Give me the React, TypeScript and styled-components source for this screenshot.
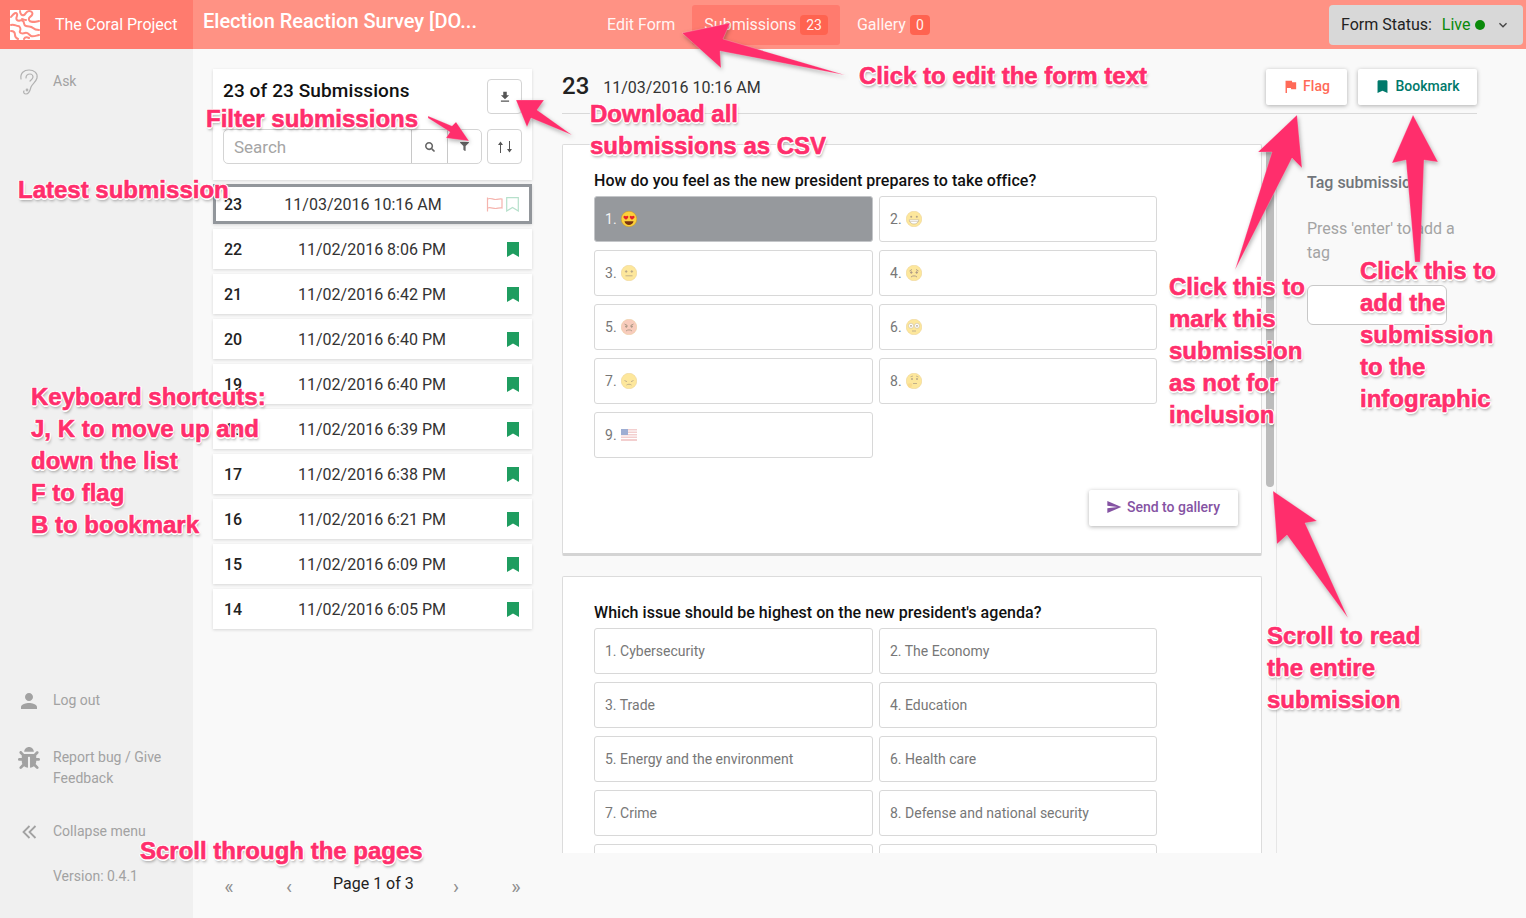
import React from 'react';
import styled, { createGlobalStyle } from 'styled-components';
import { FaBug, FaFilter, FaSearch } from 'react-icons/fa';
import { MdBookmark, MdFileDownload, MdFlag, MdKeyboardArrowDown, MdPerson, MdSend } from 'react-icons/md';

const GlobalStyle = createGlobalStyle`
  html, body { margin: 0; padding: 0; background: #f9f9f9; }
  body { font-family: Roboto, "Noto Sans", sans-serif; color: #222; overflow: hidden; }
  * { box-sizing: border-box; }
`;

const Page = styled.div`
  position: relative;
  width: 1526px;
  height: 918px;
  overflow: hidden;
  display: flex;
  flex-direction: column;
`;

const Header = styled.header`
  height: 49px;
  flex: none;
  display: flex;
  align-items: center;
  background: #ff9284;
  color: #fff;
`;

const Brand = styled.div`
  width: 193px;
  height: 100%;
  flex: none;
  display: flex;
  align-items: center;
  gap: 15px;
  padding-left: 10px;
  background: #ff7b6e;
  font-size: 16px;
`;

const FormTitle = styled.div`
  width: 402px;
  flex: none;
  padding-left: 10px;
  font-size: 20px;
  font-weight: 500;
  margin-top: -7px;
`;

const Nav = styled.nav`
  display: flex;
  align-items: center;
  flex: 1;
  height: 40px;
`;

const NavTab = styled.div<{ $active?: boolean }>`
  height: 40px;
  display: flex;
  align-items: center;
  gap: 4px;
  padding: 0 12px;
  border-radius: 3px;
  font-size: 16px;
  margin-right: 5px;
  color: rgba(255, 255, 255, 0.92);
  background: ${(p) => (p.$active ? '#ff7b6e' : 'transparent')};
`;

const NavBadge = styled.span`
  height: 20px;
  padding: 0 6px;
  display: flex;
  align-items: center;
  justify-content: center;
  border-radius: 4px;
  background: #ff6350;
  font-size: 14px;
`;

const StatusBox = styled.div`
  width: 194px;
  height: 40px;
  margin-right: 3px;
  flex: none;
  display: flex;
  align-items: center;
  padding: 0 12px;
  border-radius: 4px;
  background: #d8d8d8;
  color: #222;
  font-size: 16px;
`;

const LiveText = styled.span`
  color: #0a8a0a;
  margin-left: 10px;
`;

const LiveDot = styled.span`
  width: 10px;
  height: 10px;
  border-radius: 50%;
  background: #0a8a0a;
  margin-left: 4px;
  margin-right: 10px;
`;

const Body = styled.div`
  flex: 1;
  display: flex;
  min-height: 0;
`;

const Sidebar = styled.aside`
  width: 193px;
  flex: none;
  background: #f0f0f0;
  display: flex;
  flex-direction: column;
  color: #a2a2a2;
  font-size: 14px;
  line-height: 21px;
`;

const SideItem = styled.div<{ $top: number }>`
  display: flex;
  margin-top: ${(p) => p.$top}px;
`;

const SideIcon = styled.div`
  width: 53px;
  height: 21px;
  flex: none;
  display: flex;
  justify-content: center;
  align-items: center;
  padding-left: 5px;
  color: #a2a2a2;
`;

const SideLabel = styled.div`
  flex: 1;
  padding-right: 20px;
`;

const ListColumn = styled.section`
  width: 319px;
  flex: none;
  margin-left: 20px;
  padding-top: 20px;
  display: flex;
  flex-direction: column;
`;

const ListTop = styled.div`
  height: 111px;
  background: #fff;
  box-shadow: 0 1px 3px rgba(0, 0, 0, 0.14);
  padding: 10px;
  margin-bottom: 4px;
  display: flex;
  flex-direction: column;
  gap: 15px;
`;

const ListTopRow = styled.div`
  display: flex;
  align-items: center;
  justify-content: space-between;
`;

const ListTitle = styled.h2`
  margin: -12px 0 0;
  font-size: 19px;
  font-weight: 500;
  color: #111;
  letter-spacing: 0.1px;
`;

const IconButton = styled.button`
  width: 35px;
  height: 35px;
  padding: 0;
  display: flex;
  align-items: center;
  justify-content: center;
  background: #fff;
  border: 1px solid #d4d4d4;
  border-radius: 4px;
  color: #555;
  font-size: 13px;
`;

const SearchBox = styled.div`
  width: 259px;
  height: 35px;
  display: flex;
  border: 1px solid #d4d4d4;
  border-radius: 5px;
`;

const SearchInput = styled.div`
  flex: 1;
  padding-left: 10px;
  line-height: 35px;
  font-size: 17px;
  color: #a5a5a5;
`;

const SearchAddon = styled.div<{ $w: number; $size: number }>`
  width: ${(p) => p.$w}px;
  display: flex;
  align-items: center;
  justify-content: center;
  border-left: 1px solid #c8c8c8;
  color: #666;
  font-size: ${(p) => p.$size}px;
`;

const Row = styled.div<{ $active?: boolean }>`
  height: 40px;
  margin-bottom: 5px;
  display: flex;
  align-items: center;
  padding: 0 11px 0 ${(p) => (p.$active ? 8 : 11)}px;
  background: #fff;
  box-shadow: 0 1px 3px rgba(0, 0, 0, 0.14);
  border: ${(p) => (p.$active ? '3px solid #92969b' : '0')};
  font-size: 16px;
  color: #333;
`;

const RowNumber = styled.strong`
  width: 40px;
  font-weight: 500;
  color: #222;
`;

const RowDate = styled.span<{ $active?: boolean }>`
  flex: 1;
  text-align: center;
  padding-right: ${(p) => (p.$active ? 24 : 27)}px;
`;

const RowIcons = styled.span<{ $active?: boolean }>`
  display: flex;
  align-items: center;
  gap: 3px;
  margin-right: ${(p) => (p.$active ? -1 : 2)}px;
`;

const Pager = styled.div`
  margin-top: auto;
  margin-bottom: 19px;
  display: flex;
  align-items: center;
  color: #8f8f8f;
  font-size: 20px;
`;

const PagerArrow = styled.span<{ $w: number; $gap?: number }>`
  width: ${(p) => p.$w}px;
  margin-left: ${(p) => p.$gap ?? 0}px;
  flex: none;
  text-align: center;
  margin-top: 4px;
`;

const PagerText = styled.span`
  width: 80px;
  flex: none;
  margin-right: 30px;
  font-size: 16px;
  color: #222;
  white-space: nowrap;
  margin-top: -4px;
`;

const Detail = styled.main`
  width: 915px;
  flex: none;
  margin-left: 30px;
  display: flex;
  flex-direction: column;
  min-height: 0;
  height: 804px;
`;

const DetailHead = styled.div`
  height: 65px;
  flex: none;
  padding-top: 20px;
  margin-bottom: 30px;
  display: flex;
  align-items: flex-start;
  border-bottom: 1px solid #d9d9d9;
`;

const DetailNumber = styled.span`
  font-size: 24px;
  font-weight: 500;
  line-height: 36px;
  margin-top: -1px;
`;

const DetailDate = styled.span`
  font-size: 16px;
  line-height: 38px;
  margin-left: 14px;
  flex: 1;
  color: #333;
`;

const ActionButton = styled.button<{ $color: string; $w: number }>`
  width: ${(p) => p.$w}px;
  height: 36px;
  padding: 0 1px 2px 0;
  margin-left: 11px;
  display: flex;
  align-items: center;
  justify-content: center;
  gap: 4px;
  border: 0;
  border-radius: 2px;
  background: #fff;
  box-shadow: 0 1px 4px rgba(0, 0, 0, 0.3);
  color: ${(p) => p.$color};
  font-family: inherit;
  font-size: 14px;
  font-weight: 500;
  white-space: nowrap;
`;

const DetailBody = styled.div`
  flex: 1;
  min-height: 0;
  display: flex;
`;

const Scroller = styled.div`
  width: 700px;
  flex: none;
  overflow: hidden;
  display: flex;
  flex-direction: column;
  gap: 20px;
`;

const Card = styled.article<{ $h: number }>`
  height: ${(p) => p.$h}px;
  flex: none;
  position: relative;
  padding: 26px 31px 0;
  background: #fff;
  border: 1px solid #dcdcdc;
  border-bottom: 3px solid #d4d4d4;
  border-radius: 2px;
`;

const Question = styled.h3`
  margin: 0 0 5px;
  font-size: 16px;
  line-height: 20px;
  font-weight: 500;
  color: #111;
  letter-spacing: 0.04px;
`;

const OptionGrid = styled.div`
  display: grid;
  grid-template-columns: 279px 278px;
  grid-auto-rows: 46px;
  gap: 8px 6px;
`;

const Option = styled.div<{ $selected?: boolean }>`
  display: flex;
  align-items: center;
  gap: 4px;
  padding-left: 10px;
  border: 1px solid ${(p) => (p.$selected ? '#c4c6c9' : '#d8d8d8')};
  border-radius: 3px;
  background: ${(p) => (p.$selected ? '#96999d' : '#fff')};
  color: ${(p) => (p.$selected ? '#f4f4f4' : '#777')};
  font-size: 14px;
`;

const SendButton = styled.button`
  position: absolute;
  right: 23px;
  bottom: 27px;
  width: 149px;
  height: 36px;
  padding: 0 1px 2px 0;
  display: flex;
  align-items: center;
  justify-content: center;
  gap: 5px;
  border: 0;
  border-radius: 2px;
  background: #fff;
  box-shadow: 0 1px 4px rgba(0, 0, 0, 0.3);
  color: #8553a3;
  font-family: inherit;
  font-size: 14px;
  font-weight: 500;
`;

const ScrollTrack = styled.div`
  width: 14px;
  flex: none;
  padding-left: 4px;
`;

const ScrollThumb = styled.div`
  width: 8px;
  height: 343px;
  border-radius: 0 0 4px 4px;
  background: #bcbcbc;
`;

const TagPanel = styled.aside`
  flex: 1;
  border-left: 1px solid #e6e6e6;
  padding: 29px 0 0 30px;
`;

const TagTitle = styled.h4`
  margin: 0 0 24px;
  font-size: 16px;
  line-height: 20px;
  font-weight: 500;
  color: #71757a;
  white-space: nowrap;
`;

const TagHint = styled.p`
  margin: 0 0 20px;
  width: 165px;
  font-size: 16px;
  line-height: 24px;
  color: #a4a4a4;
`;

const TagInput = styled.div`
  width: 140px;
  height: 40px;
  background: #fff;
  border: 1px solid #c8c8c8;
  border-radius: 6px;
`;

const Overlay = styled.div`
  position: absolute;
  inset: 0;
  pointer-events: none;
`;

const ArrowLayer = styled.svg`
  position: absolute;
  inset: 0;
  filter: drop-shadow(1px 2px 2px rgba(0, 0, 0, 0.3));
`;

const Note = styled.div<{ $x: number; $y: number }>`
  position: absolute;
  left: ${(p) => p.$x}px;
  top: ${(p) => p.$y}px;
  font-family: "Liberation Sans", Arial, sans-serif;
  font-size: 24px;
  font-weight: 700;
  line-height: 32px;
  color: #ff2e6c;
  white-space: pre;
  -webkit-text-stroke: 0.6px #ff2e6c;
  text-shadow: 1.5px 0 0 #fff, -1.5px 0 0 #fff, 0 1.5px 0 #fff, 0 -1.5px 0 #fff, 1px 1px 0 #fff, -1px -1px 0 #fff,
    1px -1px 0 #fff, -1px 1px 0 #fff, 1px 3px 3px rgba(0, 0, 0, 0.35);
`;

const LogoMark = () => (
  <svg width="30" height="30" viewBox="0 0 30 30">
    <rect width="30" height="30" fill="#fff" />
    <g fill="none" stroke="#ff8a7e" strokeWidth="2" strokeLinecap="round" strokeLinejoin="round">
      <path d="M1 7c3-4 5-5 6-3s-2 4 0 6 4-1 6 1 0 4 3 5 5 0 7 2 3 2 6 2" />
      <path d="M10 1c0 3 2 5 4 4s2-4 5-4 4 2 3 4-4 2-3 5 5 2 10 1" />
      <path d="M16 10c-2 0-3-1-4-1" />
      <path d="M1 15c3-1 5 1 7 1s3 3 2 5 2 3 5 2 4 2 6 3 4 0 8-1" />
      <path d="M1 21c3 0 4 2 4 4s1 3 3 4" />
      <path d="M14 29c1-2 3-2 5-1" />
    </g>
  </svg>
);

const EarIcon = () => (
  <svg width="20" height="26" viewBox="0 0 20 26" fill="none" stroke="#b2b2b2" strokeWidth="1.2" strokeLinecap="round">
    <path d="M2 10C1 4 5 1 10 1s9 3 8 8c-1 4-5 6-6 9-1 4-2 7-5 7-2 0-3-2-2-3" />
    <path d="M7 9c0-3 2-4 4-4s3 2 3 3c0 2-2 3-3 4" />
    <circle cx="8" cy="21" r="0.8" />
  </svg>
);

const CollapseIcon = () => (
  <svg width="15" height="14" viewBox="0 0 15 14" fill="none" stroke="#a2a2a2" strokeWidth="1.8">
    <path d="M7.500 1L1.500 7l6 6M13.500 1l-6 6 6 6" />
  </svg>
);

const WavyFlag = () => (
  <svg width="17" height="15" viewBox="0 0 17 15" fill="none" stroke="#f5b4ae" strokeWidth="1.2">
    <path d="M1.500 0.500v14" />
    <path d="M1.500 2c3-1.500 5 .5 8 .5s4-1 6.500-.5v9c-3-.5-4 .5-6.500.5s-5-1.500-8-.5" />
  </svg>
);

const HollowBookmark = () => (
  <svg width="13" height="15" viewBox="0 0 13 15" fill="none" stroke="#b6e0cb" strokeWidth="1.2">
    <path d="M0.700 0.700h11.600v13.300l-5.800-3.500-5.800 3.500z" />
  </svg>
);

const SolidBookmark = () => (
  <svg width="12" height="15" viewBox="0 0 12 15" fill="#1f9d60">
    <path d="M0 0h12v15l-6-3.500-6 3.500z" />
  </svg>
);

const FACE: Record<string, string> = { angry: '#f39a7c', neutral: '#fcd03c' };

// small hand drawn emoji, the reference has Apple ones
const Emoji = ({ kind, faded = true }: { kind: string; faded?: boolean }) => {
  if (kind === 'flag') {
    return (
      <svg width="16" height="16" viewBox="0 0 16 16" opacity={0.5}>
        <rect y="2" width="16" height="12" fill="#e8a0a0" />
        <path d="M0 4h16M0 6.500h16M0 9h16M0 11.500h16" stroke="#fff" strokeWidth="1.100" />
        <rect y="2" width="7" height="6" fill="#3f5fa8" />
      </svg>
    );
  }
  const fill = FACE[kind] || FACE.neutral;
  return (
    <svg width="16" height="16" viewBox="0 0 16 16" opacity={faded ? 0.5 : 1}>
      <circle cx="8" cy="8" r="7.800" fill={fill} stroke="#c98f10" strokeWidth="0.400" />
      {kind === 'love' && (
        <g fill="#e5232b">
          <path d="M2.500 5.500c1-1.400 2-.8 2.500 0 .5-.8 1.600-1.400 2.300 0 .4 1-1 2.500-2.300 3.200C3.800 8 2 6.700 2.500 5.500z" />
          <path d="M8.700 5.500c.7-1.400 1.800-.8 2.300 0 .5-.8 1.500-1.400 2.500 0 .5 1.200-1.300 2.500-2.500 3.200-1.300-.7-2.700-2.200-2.300-3.200z" />
          <path d="M3.500 10.200h9c-.5 2.500-2.500 3.800-4.500 3.800s-4-1.300-4.500-3.800z" fill="#7a3410" />
        </g>
      )}
      {kind === 'grin' && (
        <g>
          <circle cx="5.200" cy="5.800" r="1" fill="#6b4a12" />
          <circle cx="10.800" cy="5.800" r="1" fill="#6b4a12" />
          <path d="M3.200 8.800h9.600c-.4 3-2.600 4.200-4.800 4.200s-4.400-1.200-4.800-4.200z" fill="#fff" stroke="#6b4a12" strokeWidth="0.500" />
          <path d="M3.500 10.500h9" stroke="#6b4a12" strokeWidth="0.400" />
        </g>
      )}
      {kind === 'neutral' && (
        <g stroke="#6b4a12" strokeWidth="0.800">
          <circle cx="5.200" cy="6.500" r="0.800" fill="#6b4a12" />
          <circle cx="10.800" cy="6.500" r="0.800" fill="#6b4a12" />
          <path d="M4.500 10.800h7" />
        </g>
      )}
      {(kind === 'sad' || kind === 'angry') && (
        <g stroke="#5e3510" strokeWidth="0.900" fill="none">
          <path d={kind === 'angry' ? 'M3.500 5l3 1.500M12.500 5l-3 1.500' : 'M3.500 6l2.500-1.500M12.500 6l-2.500-1.500'} />
          <circle cx="5.300" cy="7.500" r="0.800" fill="#5e3510" />
          <circle cx="10.700" cy="7.500" r="0.800" fill="#5e3510" />
          <path d="M5 12c1.500-1.500 4.500-1.500 6 0" />
        </g>
      )}
      {kind === 'flushed' && (
        <g>
          <circle cx="5" cy="6.800" r="2.500" fill="#fff" stroke="#6b4a12" strokeWidth="0.400" />
          <circle cx="11" cy="6.800" r="2.500" fill="#fff" stroke="#6b4a12" strokeWidth="0.400" />
          <circle cx="5" cy="6.800" r="0.900" fill="#6b4a12" />
          <circle cx="11" cy="6.800" r="0.900" fill="#6b4a12" />
          <path d="M6 12h4" stroke="#6b4a12" strokeWidth="0.800" />
        </g>
      )}
      {kind === 'pensive' && (
        <g stroke="#6b4a12" strokeWidth="0.800" fill="none">
          <path d="M3.500 7.500l2.500 1.200M12.500 7.500L10 8.700" />
          <path d="M5.500 12c1.500-1 3.500-1 5 0" />
        </g>
      )}
      {kind === 'think' && (
        <g>
          <circle cx="6" cy="6" r="0.900" fill="#6b4a12" />
          <circle cx="11" cy="6" r="0.900" fill="#6b4a12" />
          <path d="M4.500 3.800l2.500-.8M10 3l2.500 1" stroke="#6b4a12" strokeWidth="0.700" fill="none" />
          <path d="M7 10.500h4" stroke="#6b4a12" strokeWidth="0.800" />
          <path d="M1.500 11c1-1 3-1 4.500-.5.5 1 0 3-1.500 4.500-2 0-3.500-2-3-4z" fill="#f5b81f" />
        </g>
      )}
    </svg>
  );
};

const SortArrows = () => (
  <svg width="16" height="12" viewBox="0 0 16 12" fill="#555">
    <path d="M3 12V4H1l2.500-3.500L6 4H4v8z" />
    <path d="M12 0v8h-2l2.500 3.500L15 8h-2V0z" />
  </svg>
);

const ROWS = [
  ['22', '11/02/2016 8:06 PM'],
  ['21', '11/02/2016 6:42 PM'],
  ['20', '11/02/2016 6:40 PM'],
  ['19', '11/02/2016 6:40 PM'],
  ['18', '11/02/2016 6:39 PM'],
  ['17', '11/02/2016 6:38 PM'],
  ['16', '11/02/2016 6:21 PM'],
  ['15', '11/02/2016 6:09 PM'],
  ['14', '11/02/2016 6:05 PM'],
];

const FEELINGS = ['love', 'grin', 'neutral', 'sad', 'angry', 'flushed', 'pensive', 'think', 'flag'];

const ISSUES = [
  'Cybersecurity',
  'The Economy',
  'Trade',
  'Education',
  'Energy and the environment',
  'Health care',
  'Crime',
  'Defense and national security',
  '',
  '',
];

const ARROWS = [
  '682,33 730,23 723,39 845,75 720,51 721,68',
  '428,116 452,126 456,122 469,141 446,138 450,132 428,118',
  '516,100 544,100 537,110 572,135 531,118 527,127',
  '1297,115 1302,168 1292,158 1235,270 1272,152 1258,152',
  '1413,115 1438,162 1424,160 1420,262 1415,262 1406,160 1392,163',
  '1273,491 1317,521 1305,523 1348,618 1287,535 1277,544',
];

const NOTES: { x: number; y: number; text: string }[] = [
  { x: 859, y: 60, text: 'Click to edit the form text' },
  { x: 206, y: 103, text: 'Filter submissions' },
  { x: 590, y: 98, text: 'Download all\nsubmissions as CSV' },
  { x: 18, y: 174, text: 'Latest submission' },
  { x: 31, y: 381, text: 'Keyboard shortcuts:\nJ, K to move up and\ndown the list\nF to flag\nB to bookmark' },
  { x: 1169, y: 271, text: 'Click this to\nmark this\nsubmission\nas not for\ninclusion' },
  { x: 1360, y: 255, text: 'Click this to\nadd the\nsubmission\nto the\ninfographic' },
  { x: 1267, y: 620, text: 'Scroll to read\nthe entire\nsubmission' },
  { x: 140, y: 835, text: 'Scroll through the pages' },
];

export default function App() {
  return (
    <Page>
      <GlobalStyle />
      <Header>
        <Brand>
          <LogoMark />
          The Coral Project
        </Brand>
        <FormTitle>Election Reaction Survey [DO...</FormTitle>
        <Nav>
          <NavTab>Edit Form</NavTab>
          <NavTab $active>
            Submissions <NavBadge>23</NavBadge>
          </NavTab>
          <NavTab>
            Gallery <NavBadge>0</NavBadge>
          </NavTab>
        </Nav>
        <StatusBox>
          Form Status:
          <LiveText>Live</LiveText>
          <LiveDot />
          <MdKeyboardArrowDown size={16} color="#444" />
        </StatusBox>
      </Header>
      <Body>
        <Sidebar>
          <SideItem $top={22}>
            <SideIcon>
              <EarIcon />
            </SideIcon>
            <SideLabel>Ask</SideLabel>
          </SideItem>
          <SideItem $top={598}>
            <SideIcon>
              <MdPerson size={24} />
            </SideIcon>
            <SideLabel>Log out</SideLabel>
          </SideItem>
          <SideItem $top={36}>
            <SideIcon>
              <FaBug size={22} />
            </SideIcon>
            <SideLabel>Report bug / Give Feedback</SideLabel>
          </SideItem>
          <SideItem $top={32}>
            <SideIcon>
              <CollapseIcon />
            </SideIcon>
            <SideLabel>Collapse menu</SideLabel>
          </SideItem>
          <SideItem $top={24}>
            <SideIcon />
            <SideLabel>Version: 0.4.1</SideLabel>
          </SideItem>
        </Sidebar>
        <ListColumn>
          <ListTop>
            <ListTopRow>
              <ListTitle>23 of 23 Submissions</ListTitle>
              <IconButton>
                <MdFileDownload size={14} />
              </IconButton>
            </ListTopRow>
            <ListTopRow>
              <SearchBox>
                <SearchInput>Search</SearchInput>
                <SearchAddon $w={36} $size={10}>
                  <FaSearch />
                </SearchAddon>
                <SearchAddon $w={34} $size={9}>
                  <FaFilter />
                </SearchAddon>
              </SearchBox>
              <IconButton>
                <SortArrows />
              </IconButton>
            </ListTopRow>
          </ListTop>
          <Row $active>
            <RowNumber>23</RowNumber>
            <RowDate $active>11/03/2016 10:16 AM</RowDate>
            <RowIcons $active>
              <WavyFlag />
              <HollowBookmark />
            </RowIcons>
          </Row>
          {ROWS.map(([num, date]) => (
            <Row key={num}>
              <RowNumber>{num}</RowNumber>
              <RowDate>{date}</RowDate>
              <RowIcons>
                <SolidBookmark />
              </RowIcons>
            </Row>
          ))}
          <Pager>
            <PagerArrow $w={32}>«</PagerArrow>
            <PagerArrow $w={88}>‹</PagerArrow>
            <PagerText>Page 1 of 3</PagerText>
            <PagerArrow $w={26}>›</PagerArrow>
            <PagerArrow $w={30} $gap={32}>»</PagerArrow>
          </Pager>
        </ListColumn>
        <Detail>
          <DetailHead>
            <DetailNumber>23</DetailNumber>
            <DetailDate>11/03/2016 10:16 AM</DetailDate>
            <ActionButton $color="#ff6a58" $w={81}>
              <MdFlag size={17} />
              Flag
            </ActionButton>
            <ActionButton $color="#00796b" $w={119}>
              <MdBookmark size={17} />
              Bookmark
            </ActionButton>
          </DetailHead>
          <DetailBody>
            <Scroller>
              <Card $h={412}>
                <Question>How do you feel as the new president prepares to take office?</Question>
                <OptionGrid>
                  {FEELINGS.map((kind, i) => (
                    <Option key={kind} $selected={i === 0}>
                      {i + 1}. <Emoji kind={kind} faded={i !== 0} />
                    </Option>
                  ))}
                </OptionGrid>
                <SendButton>
                  <MdSend size={16} />
                  Send to gallery
                </SendButton>
              </Card>
              <Card $h={400}>
                <Question>Which issue should be highest on the new president's agenda?</Question>
                <OptionGrid>
                  {ISSUES.map((label, i) => (
                    <Option key={i}>{label ? `${i + 1}. ${label}` : ''}</Option>
                  ))}
                </OptionGrid>
              </Card>
            </Scroller>
            <ScrollTrack>
              <ScrollThumb />
            </ScrollTrack>
            <TagPanel>
              <TagTitle>Tag submission</TagTitle>
              <TagHint>Press 'enter' to add a tag</TagHint>
              <TagInput />
            </TagPanel>
          </DetailBody>
        </Detail>
      </Body>
      <Overlay>
        <ArrowLayer width="1526" height="918" viewBox="0 0 1526 918">
          {ARROWS.map((points) => (
            <polygon key={points} points={points} fill="#ff2e6c" stroke="#fff" strokeOpacity="0.35" strokeWidth="0.6" />
          ))}
        </ArrowLayer>
        {NOTES.map((n) => (
          <Note key={n.text} $x={n.x} $y={n.y}>
            {n.text}
          </Note>
        ))}
      </Overlay>
    </Page>
  );
}
